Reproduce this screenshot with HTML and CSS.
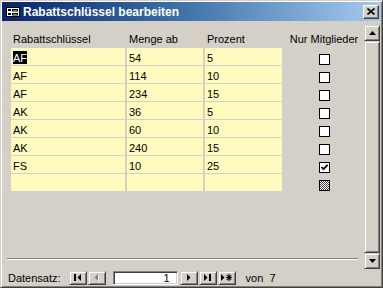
FILE: index.html
```html
<!DOCTYPE html>
<html lang="de">
<head>
<meta charset="utf-8">
<title>Rabattschlüssel bearbeiten</title>
<link rel="stylesheet" href="styles.css">
</head>
<body>
<div class="window">
  <div class="titlebar">
    <svg class="ticon" width="16" height="16" viewBox="0 0 16 16">
      <rect x="1.5" y="3.5" width="13" height="9" fill="#fff" stroke="#000"/>
      <rect x="3" y="5" width="3" height="2" fill="#000"/>
      <rect x="3" y="9" width="3" height="2" fill="#000"/>
      <rect x="7.5" y="5.5" width="5" height="1.5" fill="#fff" stroke="#000" stroke-width="1"/>
      <rect x="7.5" y="9.5" width="5" height="1.5" fill="#fff" stroke="#000" stroke-width="1"/>
    </svg>
    <span class="title">Rabattschlüssel bearbeiten</span>
    <div class="close">
      <svg width="8" height="7" viewBox="0 0 8 7"><path d="M0.5 0.5 L7.5 6.5 M7.5 0.5 L0.5 6.5" stroke="#000" stroke-width="1.6"/></svg>
    </div>
  </div>
  <div class="client">
    <div class="main">
      <div class="form">
        <div class="cols head">
          <div class="hcell">Rabattschlüssel</div>
          <div class="hcell">Menge ab</div>
          <div class="hcell">Prozent</div>
          <div class="hcell center">Nur Mitglieder</div>
        </div>
        <div class="rows">
          <div class="cols row"><div class="cell"><span class="sel">AF</span></div><div class="cell">54</div><div class="cell">5</div><div class="chk"><span class="box"></span></div></div>
          <div class="cols row"><div class="cell">AF</div><div class="cell">114</div><div class="cell">10</div><div class="chk"><span class="box"></span></div></div>
          <div class="cols row"><div class="cell">AF</div><div class="cell">234</div><div class="cell">15</div><div class="chk"><span class="box"></span></div></div>
          <div class="cols row"><div class="cell">AK</div><div class="cell">36</div><div class="cell">5</div><div class="chk"><span class="box"></span></div></div>
          <div class="cols row"><div class="cell">AK</div><div class="cell">60</div><div class="cell">10</div><div class="chk"><span class="box"></span></div></div>
          <div class="cols row"><div class="cell">AK</div><div class="cell">240</div><div class="cell">15</div><div class="chk"><span class="box"></span></div></div>
          <div class="cols row"><div class="cell">FS</div><div class="cell">10</div><div class="cell">25</div><div class="chk"><span class="box"><svg width="9" height="9" viewBox="0 0 9 9"><path d="M1.5 4 L3.5 6.2 L7.6 1.8" fill="none" stroke="#000" stroke-width="1.8"/></svg></span></div></div>
          <div class="cols row"><div class="cell"></div><div class="cell"></div><div class="cell"></div><div class="chk"><span class="box dither"></span></div></div>
        </div>
        <div class="etched"></div>
      </div>
      <div class="vscroll">
        <div class="bevel sbtn"><svg width="7" height="4" viewBox="0 0 7 4"><path d="M3.5 0 L7 4 L0 4 Z" fill="#000"/></svg></div>
        <div class="bevel thumb"></div>
        <div class="bevel sbtn"><svg width="7" height="4" viewBox="0 0 7 4"><path d="M0 0 L7 0 L3.5 4 Z" fill="#000"/></svg></div>
      </div>
    </div>
    <div class="nav">
      <span class="navlabel">Datensatz:</span>
      <div class="bevel nbtn"><svg width="7" height="7" viewBox="0 0 7 7"><rect x="0" y="0" width="2" height="7" fill="#000"/><path d="M7 0 L7 7 L3.5 3.5 Z" fill="#000"/></svg></div>
      <div class="bevel nbtn"><svg width="5" height="8" viewBox="0 0 5 8"><path d="M5 1 L5 8 L1.5 4.5 Z" fill="#fff"/><path d="M4 0 L4 7 L0.5 3.5 Z" fill="#808080"/></svg></div>
      <div class="recbox">1</div>
      <div class="bevel nbtn"><svg width="4" height="7" viewBox="0 0 4 7"><path d="M0 0 L0 7 L3.5 3.5 Z" fill="#000"/></svg></div>
      <div class="bevel nbtn"><svg width="7" height="7" viewBox="0 0 7 7"><path d="M0 0 L0 7 L3.5 3.5 Z" fill="#000"/><rect x="5" y="0" width="2" height="7" fill="#000"/></svg></div>
      <div class="bevel nbtn"><svg width="11" height="7" viewBox="0 0 11 7"><path d="M0 0 L0 7 L3.5 3.5 Z" fill="#000"/><path d="M8 0 L8 7 M5 3.5 L11 3.5 M5.8 1 L10.2 6 M10.2 1 L5.8 6" stroke="#000" stroke-width="1.1"/></svg></div>
      <span class="von">von&nbsp;&nbsp;7</span>
    </div>
  </div>
</div>
</body>
</html>
```

FILE: styles.css
```css
* { box-sizing: border-box; }
html, body { margin: 0; padding: 0; background: #D4D0C8; }
body { font-family: "Liberation Sans", Arial, sans-serif; font-size: 11px; color: #000; }

.window {
  width: 383px; height: 288px;
  display: flex; flex-direction: column;
  background: #D4D0C8;
  border: 1px solid; border-color: #D4D0C8 #404040 #404040 #D4D0C8;
  box-shadow: inset 1px 1px #fff, inset -1px -1px #808080;
  padding: 1px;
}

.titlebar {
  height: 19px; flex: none;
  display: flex; align-items: center;
  background: linear-gradient(90deg, #0A246A 0%, #3A6EA5 45%, #A6CAF0 100%);
  color: #fff; padding-left: 3px;
}
.ticon { display: block; flex: none; }
.title {
  margin-left: 2px;
  font-family: "Liberation Sans", Arial, sans-serif; font-weight: bold; font-size: 12px;
  white-space: nowrap;
}
.close {
  margin-left: auto; margin-right: 2px;
  width: 16px; height: 14px;
  display: flex; align-items: center; justify-content: center;
  background: #D4D0C8;
  border: 1px solid; border-color: #fff #404040 #404040 #fff;
  box-shadow: inset -1px -1px #808080;
}
.close svg { display: block; }

.client { flex: 1; display: flex; flex-direction: column; min-height: 0; }
.main { flex: 1; display: flex; min-height: 0; }
.form { flex: 1; display: flex; flex-direction: column; padding-left: 9px; }

.cols {
  display: grid;
  grid-template-columns: 114px 76px 77px 1fr;
  column-gap: 2px;
}
.head { height: 27px; padding-top: 12px; line-height: 13px; }
.hcell { padding-left: 2px; white-space: nowrap; }
.hcell.center { text-align: center; padding-left: 0; }

.rows { display: flex; flex-direction: column; row-gap: 1px; }
.row { height: 17px; }
.cell {
  background: #FFFBBF;
  padding: 3px 0 0 2px; line-height: 14px;
  white-space: nowrap;
}
.sel { background: #000; color: #fff; display: inline-block; line-height: 12px; padding-top: 1px; }
.chk { display: flex; justify-content: center; padding-top: 6px; }
.box {
  width: 11px; height: 11px;
  border: 1px solid #000; background: #fff;
  display: flex; align-items: center; justify-content: center;
}
.box svg { display: block; }
.box.dither {
  background-color: #fff;
  background-image: repeating-conic-gradient(#404040 0 25%, #fff 0 50%);
  background-size: 2px 2px;
}

.etched {
  margin: auto 6px 9px -4px;
  height: 2px;
  border-top: 1px solid #808080;
  border-bottom: 1px solid #fff;
}

.bevel {
  background: #D4D0C8;
  border: 1px solid; border-color: #D4D0C8 #404040 #404040 #D4D0C8;
  box-shadow: inset 1px 1px #fff, inset -1px -1px #808080;
  display: flex; align-items: center; justify-content: center;
}
.bevel svg { display: block; }

.vscroll { width: 16px; flex: none; margin: 4px 1px 0 0; display: flex; flex-direction: column; }
.sbtn { height: 16px; flex: none; }
.thumb { flex: 1; }

.nav {
  height: 17px; flex: none;
  display: flex; align-items: center;
  padding-left: 6px;
  column-gap: 1px;
}
.navlabel { margin-right: 7px; }
.nbtn { width: 18px; height: 14px; flex: none; }
.recbox {
  width: 65px; height: 14px; margin: 0 1px 0 6px;
  background: #fff; color: #000;
  border: 1px solid; border-color: #808080 #fff #fff #808080;
  box-shadow: inset 1px 1px #404040, inset -1px -1px #D4D0C8;
  text-align: right; padding-right: 7px; line-height: 12px;
}
.von { margin-left: 9px; }
```
